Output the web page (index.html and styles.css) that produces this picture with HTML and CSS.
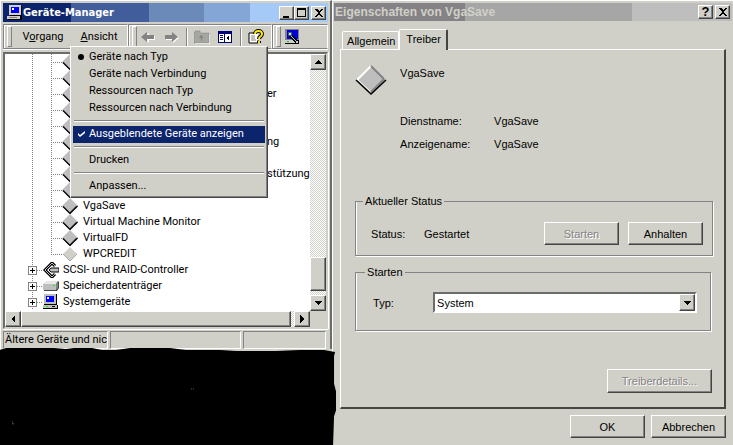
FILE: index.html
```html
<!DOCTYPE html>
<html lang="de">
<head>
    <meta charset="UTF-8">
    <meta name="viewport" content="width=device-width, initial-scale=1.0">
    <title>Geräte-Manager</title>
    <link rel="stylesheet" href="styles.css">
</head>
<body>
    <!-- shared tree icons -->
    <svg class="defs" width="0" height="0" aria-hidden="true">
        <symbol id="diamond" viewBox="0 0 16 16">
            <path d="M8 0l8 8-8 8-8-8z" fill="#bdbebd"/>
            <path d="M8 14l6-6" fill="none" stroke="#848284"/>
            <path d="M1 8.500l7 7 7.500-7.500" fill="none" stroke="#000" stroke-width="1.300"/>
        </symbol>
        <symbol id="diamond-off" viewBox="0 0 16 16">
            <path d="M8 1l7 7-7 7-7-7z" fill="#d1d0c8"/>
            <path d="M1 8l7 7 7-7" fill="none" stroke="#a5a6a0" stroke-width="1"/>
        </symbol>
    </svg>

    <div class="desktop">
        <div class="left">
            <section class="window">
                <header class="titlebar">
                    <svg class="icon" viewBox="0 0 16 16" shape-rendering="crispEdges">
                        <path d="M2 0h12v10H2z" fill="#d1d0c8"/><path d="M4 2h8v6H4z" fill="#0000ff"/><path d="M5 3h2v2H5z" fill="#fff"/>
                        <path d="M14 1h1v10H3v-1h11z" fill="#000"/><path d="M0 11h13v3H0z" fill="#d1d0c8"/><path d="M13 11h2v4H1v-1h12z" fill="#000"/><path d="M2 12h8v1H2z" fill="#848284"/>
                    </svg>
                    <h1>Geräte-Manager</h1>
                    <button class="cap" aria-label="Minimieren"><svg viewBox="0 0 10 10"><path d="M1 8h6v2H1z"/></svg></button>
                    <button class="cap" aria-label="Maximieren"><svg viewBox="0 0 10 10"><path d="M0 0h9v9H0zM1 2v6h7V2z" fill-rule="evenodd"/></svg></button>
                    <button class="cap close" aria-label="Schließen"><svg viewBox="0 0 10 10"><path d="M1 1h2l2 2 2-2h2L6 5l3 4H7L5 6 3 9H1l3-4z"/></svg></button>
                </header>

                <div class="toolbar">
                    <nav class="band menus">
                        <button class="menu-button"><span>V<u>o</u>rgang</span></button>
                        <div class="dropdown">
                            <button class="menu-button"><u>A</u>nsicht</button>
                            <div class="menu">
                                <button class="item"><span class="mark"><svg viewBox="0 0 8 8"><circle cx="4" cy="4" r="3"/></svg></span>Geräte nach Typ</button>
                                <button class="item"><span class="mark"></span>Geräte nach Verbindung</button>
                                <button class="item"><span class="mark"></span>Ressourcen nach Typ</button>
                                <button class="item"><span class="mark"></span>Ressourcen nach Verbindung</button>
                                <hr>
                                <button class="item active"><span class="mark"><svg viewBox="0 0 8 8"><path d="M1 3v2l2 2 5-4V1L3 5z"/></svg></span>Ausgeblendete Geräte anzeigen</button>
                                <hr>
                                <button class="item"><span class="mark"></span>Drucken</button>
                                <hr>
                                <button class="item"><span class="mark"></span>Anpassen...</button>
                            </div>
                        </div>
                    </nav>
                    <div class="band tools">
                        <button class="tool" aria-label="Zurück"><svg viewBox="0 0 16 16"><path d="M3 9l6-5v3h6v4H9v3z" fill="#fff"/><path d="M1 8l6-5v3h7v4H7v3z" fill="#848284"/></svg></button>
                        <button class="tool" aria-label="Vorwärts"><svg viewBox="0 0 16 16"><path d="M16 9l-6-5v3H3v4h7v3z" fill="#fff"/><path d="M15 8L9 3v3H2v4h7v3z" fill="#848284"/></svg></button>
                        <span class="sep"></span>
                        <button class="tool" aria-label="Aufwärts"><svg viewBox="0 0 16 16"><path d="M1 5h1l1-2h4l1 2h8v10H1z" fill="#fff"/><path d="M0 4l1-2h5l1 2h8v10H0z" fill="#a5a6a0"/><path d="M0 4l1-2h5l1 2h8v10H0z" fill="none" stroke="#848284" stroke-dasharray="1 1"/><path d="M7 6l3 3H8v3H7V9H5z" fill="#848284"/></svg></button>
                        <button class="tool" aria-label="Struktur"><svg viewBox="0 0 16 16" shape-rendering="crispEdges"><path d="M1 2h14v12H1z" fill="#00007b"/><path d="M2 5h5v8H2zM8 5h6v8H8z" fill="#fff"/><path d="M3 6h3v1H3zM3 8h3v1H3zM3 10h3v1H3z" fill="#00007b"/><path d="M12 6v6L9 9z" fill="#000"/></svg></button>
                        <span class="sep"></span>
                        <button class="tool" aria-label="Hilfe"><svg viewBox="0 0 16 16"><path d="M1 4h9v10H1z" fill="#fff"/><path d="M1 4h6M1 4v10h9v-3" fill="none" stroke="#000"/><path d="M3 7h4M3 9h4M3 11h5" stroke="#848284"/><path d="M7 5c0-4 7-4 7 0 0 3-3 2-3 5M11 12v2" fill="none" stroke="#000" stroke-width="4"/><path d="M7 5c0-4 7-4 7 0 0 3-3 2-3 5M11 12v2" fill="none" stroke="#ffe800" stroke-width="2"/></svg></button>
                    </div>
                    <div class="band extra">
                        <button class="tool" aria-label="Nach geänderter Hardware suchen"><svg viewBox="0 0 16 16" shape-rendering="crispEdges"><path d="M1 0h14v11H1z" fill="#848284"/><path d="M3 1h11v9H3z" fill="#0000d6"/><path d="M0 11h14v3H0z" fill="#d1d0c8"/><path d="M14 11h1v4H1v-1h13z" fill="#000"/><path d="M3 12h2v1H3z" fill="#00d600"/><path d="M6 6l7 7" stroke="#000" stroke-width="3"/><path d="M6 6l7 7" stroke="#9cf" stroke-width="1"/><circle cx="6" cy="5" r="2" fill="#cef" stroke="#357"/></svg></button>
                    </div>
                </div>

                <div class="view">
                    <ul class="tree">
                        <li class="child"><svg class="icon"><use href="#diamond"/></svg></li>
                        <li class="child"><svg class="icon"><use href="#diamond"/></svg></li>
                        <li class="child cut"><svg class="icon"><use href="#diamond"/></svg><span>er</span></li>
                        <li class="child"><svg class="icon"><use href="#diamond"/></svg></li>
                        <li class="child"><svg class="icon"><use href="#diamond"/></svg></li>
                        <li class="child cut"><svg class="icon"><use href="#diamond"/></svg><span>ng</span></li>
                        <li class="child"><svg class="icon"><use href="#diamond"/></svg></li>
                        <li class="child cut"><svg class="icon"><use href="#diamond"/></svg><span>stützung</span></li>
                        <li class="child"><svg class="icon"><use href="#diamond"/></svg></li>
                        <li class="child"><svg class="icon"><use href="#diamond"/></svg><span>VgaSave</span></li>
                        <li class="child"><svg class="icon"><use href="#diamond"/></svg><span>Virtual Machine Monitor</span></li>
                        <li class="child"><svg class="icon"><use href="#diamond"/></svg><span>VirtualFD</span></li>
                        <li class="child last"><svg class="icon"><use href="#diamond-off"/></svg><span>WPCREDIT</span></li>
                        <li class="group">
                            <button class="expand" aria-label="Erweitern"></button>
                            <svg class="icon" viewBox="0 0 16 16"><path d="M12 4L9 1 2 8l7 7 3-3" fill="none" stroke="#000" stroke-width="3"/><path d="M12 4L9 1 2 8l7 7 3-3" fill="none" stroke="#bdbebd" stroke-width="1"/><path d="M6 8l2-2h8v4H8z" fill="#bdbebd" stroke="#000"/></svg>
                            <span>SCSI- und RAID-Controller</span>
                        </li>
                        <li class="group">
                            <button class="expand" aria-label="Erweitern"></button>
                            <svg class="icon" viewBox="0 0 16 16"><path d="M1 6l3-3h11l1 1v6l-2 3H1z" fill="#424542"/><path d="M0 6l3-3h12l-2 3z" fill="#e7e7e7"/><path d="M0 6h13v6H0z" fill="#bdbebd"/><path d="M13 6l2-2v6l-2 2z" fill="#848284"/><path d="M10 7h2v1h-2z" fill="#0f0"/></svg>
                            <span>Speicherdatenträger</span>
                        </li>
                        <li class="group">
                            <button class="expand" aria-label="Erweitern"></button>
                            <svg class="icon" viewBox="0 0 16 16" shape-rendering="crispEdges"><path d="M1 0h13v11H1z" fill="#000"/><path d="M1 0h12v10H1z" fill="#bdbebd"/><path d="M3 2h8v6H3z" fill="#0000ff"/><path d="M4 3h2v2H4z" fill="#fff"/><path d="M0 11h15v4H0z" fill="#000"/><path d="M0 11h14v3H0z" fill="#bdbebd"/><path d="M3 12h2v1H3z" fill="#0f0"/><path d="M9 12h3v1H9z" fill="#000"/></svg>
                            <span>Systemgeräte</span>
                        </li>
                    </ul>
                    <div class="scroll vertical">
                        <button class="arrow" aria-label="Nach oben"><svg viewBox="0 0 8 8"><path d="M4 2l4 4H0z"/></svg></button>
                        <div class="track"><div class="thumb"></div></div>
                        <button class="arrow" aria-label="Nach unten"><svg viewBox="0 0 8 8"><path d="M0 2h8L4 6z"/></svg></button>
                    </div>
                    <div class="scroll horizontal">
                        <button class="arrow" aria-label="Nach links"><svg viewBox="0 0 8 8"><path d="M6 0v8L2 4z"/></svg></button>
                        <div class="track"><div class="thumb"></div></div>
                        <button class="arrow" aria-label="Nach rechts"><svg viewBox="0 0 8 8"><path d="M2 0l4 4-4 4z"/></svg></button>
                    </div>
                </div>

                <footer class="status">
                    <span>Ältere Geräte und nic</span>
                    <span></span>
                    <span></span>
                </footer>
            </section>
            <div class="blackout">
                <svg viewBox="0 0 336 98" preserveAspectRatio="none">
                    <path d="M0 2L6 0h48l12 1 8-1h18l10 2h14l14-2h40l16 2h34l16 1h40l24-1h24l11 2-1 4v28l2 8v19l-2 6-1 30H0z"/>
                    <path d="M191 41h1v1h-1zM193 41h1v1h-1zM12 74h1v1h-1zM12 76h2v1h-2z" fill="#555"/>
                </svg>
            </div>
        </div>

        <section class="dialog">
            <header class="titlebar">
                <h2>Eigenschaften von VgaSave</h2>
                <button class="cap" aria-label="Hilfe">?</button>
                <button class="cap close" aria-label="Schließen"><svg viewBox="0 0 10 10"><path d="M1 1h2l2 2 2-2h2L6 5l3 4H7L5 6 3 9H1l3-4z"/></svg></button>
            </header>

            <div class="tabs">
                <button class="tab">Allgemein</button>
                <button class="tab current">Treiber</button>
            </div>

            <div class="page">
                <div class="device">
                    <svg class="big-icon" viewBox="0 0 32 32">
                        <path d="M16 1l15 15-15 15L1 16z" fill="#bdbebd"/>
                        <path d="M2 16L16 2" stroke="#fff" stroke-width="2"/>
                        <path d="M16 2l13 13" stroke="#848284" stroke-width="2"/>
                        <path d="M2 15l14 13" stroke="#fff" stroke-width="1"/>
                        <path d="M16 28l13-13" stroke="#848284" stroke-width="2"/>
                        <path d="M1 16l15 14 15-14" fill="none" stroke="#000" stroke-width="1.500"/>
                    </svg>
                    <span>VgaSave</span>
                </div>
                <dl class="facts">
                    <dt>Dienstname:</dt><dd>VgaSave</dd>
                    <dt>Anzeigename:</dt><dd>VgaSave</dd>
                </dl>

                <fieldset class="state">
                    <legend>Aktueller Status</legend>
                    <div class="row">
                        <span class="label">Status:</span>
                        <span class="value">Gestartet</span>
                        <button class="btn" disabled>Starten</button>
                        <button class="btn">Anhalten</button>
                    </div>
                </fieldset>

                <fieldset class="start">
                    <legend>Starten</legend>
                    <div class="row">
                        <label for="typ">Typ:</label>
                        <div class="combo">
                            <select id="typ">
                                <option>System</option>
                            </select>
                            <span class="combo-arrow"><svg viewBox="0 0 8 8"><path d="M0 2h8L4 6z"/></svg></span>
                        </div>
                    </div>
                </fieldset>

                <button class="btn details" disabled>Treiberdetails...</button>
            </div>

            <div class="actions">
                <button class="btn">OK</button>
                <button class="btn">Abbrechen</button>
            </div>
        </section>
    </div>
</body>
</html>
```

FILE: styles.css
```css
* {
    box-sizing: border-box;
}

body {
    margin: 0;
    background: #d1d0c8;
    color: #000;
    font: 11px/16px Roboto, "DejaVu Sans Condensed", sans-serif;
}

button,
select {
    margin: 0;
    padding: 0;
    border: 0;
    background: #d1d0c8;
    color: #000;
    font: inherit;
}

.defs {
    position: absolute;
}

.desktop {
    display: grid;
    grid-template-columns: 45.3% 1fr;
    min-height: 100vh;
}

.icon {
    flex: none;
    width: 16px;
    height: 16px;
}

/* raised edges used by buttons, thumbs and the menu */
.cap,
.arrow,
.thumb,
.combo-arrow,
.btn,
.menu {
    background: #d1d0c8;
    border: 1px solid;
    border-color: #fff #424542 #424542 #fff;
    box-shadow: inset -1px -1px #848284;
}

/* left window */
.left {
    display: flex;
    flex-direction: column;
    min-width: 0;
}

.window {
    padding: 2px 2px 0;
    border-top: 1px solid #fff;
    border-left: 1px solid #fff;
    border-right: 2px solid #6b6d6b;
}

.titlebar {
    display: flex;
    align-items: center;
    height: 19px;
    padding: 0 2px 0 4px;
}

.window .titlebar {
    background: linear-gradient(to right, #0c246c 21%, #425d9c 21% 45%, #6b8aba 45% 62%, #84a6d6 62% 76%, #a5caf7 76%);
}

.titlebar h1,
.titlebar h2 {
    flex: 1;
    margin: 0;
    font-size: 12px;
    line-height: 18px;
    white-space: nowrap;
}

.titlebar h1 {
    color: #fff;
    font-family: "DejaVu Sans Condensed", "DejaVu Sans", sans-serif;
    font-size: 11px;
}

.cap {
    display: flex;
    align-items: center;
    justify-content: center;
    flex: none;
    width: 15px;
    height: 14px;
    font-weight: bold;
    font-size: 13px;
    line-height: 12px;
}

.cap svg {
    width: 10px;
    height: 10px;
    shape-rendering: crispEdges;
}

.close {
    margin-left: 2px;
}

.toolbar {
    display: flex;
    height: 25px;
    margin-top: 2px;
}

.band {
    display: flex;
    align-items: center;
    border: 1px solid #848284;
    border-right-color: #fff;
    box-shadow: inset 1px 1px #fff, 0 1px #fff;
}

.band::before {
    content: "";
    flex: none;
    width: 3px;
    height: 19px;
    margin-left: 3px;
    border: 1px solid;
    border-color: #fff #848284 #848284 #fff;
}

.menus {
    flex: 0 0 125px;
}

.menus::before {
    margin-right: 3px;
}

.tools {
    flex: 0 0 144px;
}

.extra {
    flex: 1;
}

.menu-button {
    width: 56px;
    height: 20px;
    text-align: center;
    white-space: nowrap;
}

.dropdown {
    position: relative;
}

.tool {
    flex: none;
    width: 23px;
    height: 20px;
    padding: 2px 3px;
}

.tool svg {
    display: block;
    width: 16px;
    height: 16px;
}

.sep {
    flex: none;
    width: 2px;
    height: 18px;
    margin: 0 3px;
    border-left: 1px solid #848284;
    border-right: 1px solid #fff;
}

.menu {
    position: absolute;
    z-index: 3;
    top: 19px;
    left: -1px;
    width: 198px;
    padding: 2px;
}

.item {
    display: flex;
    align-items: center;
    width: 100%;
    height: 17px;
    white-space: nowrap;
}

.item.active {
    background: #0c246c;
    color: #fff;
}

.mark {
    display: flex;
    justify-content: center;
    width: 16px;
}

.mark svg {
    width: 8px;
    height: 8px;
    fill: currentColor;
}

.menu hr {
    height: 2px;
    margin: 3px 1px 4px;
    border: 0;
    border-top: 1px solid #848284;
    border-bottom: 1px solid #fff;
}

.view {
    display: grid;
    grid-template-columns: 1fr 16px;
    margin-top: 3px;
    border: 2px solid;
    border-color: #6b6d6b #d1d0c8 #d1d0c8 #6b6d6b;
    box-shadow: 0 1px #fff, 1px 0 #fff;
}

.tree {
    min-width: 0;
    margin: 0;
    padding: 0 0 1px 18px;
    background: #fff;
    list-style: none;
    overflow: hidden;
}

.tree li {
    display: flex;
    align-items: center;
    height: 16px;
    white-space: nowrap;
}

/* dotted guides: outer level, inner level, branch to the icon */
.child {
    gap: 5px;
    padding-left: 39px;
    background:
        repeating-linear-gradient(#848284 0 1px, transparent 1px 2px) 9px 0 / 1px 100% no-repeat,
        repeating-linear-gradient(#848284 0 1px, transparent 1px 2px) 28px 0 / 1px 100% no-repeat,
        repeating-linear-gradient(to right, #848284 0 1px, transparent 1px 2px) 28px 8px / 12px 1px no-repeat;
}

.child.last {
    background-size: 1px 100%, 1px 8px, 12px 1px;
}

.cut span {
    margin-left: 184px;
}

.group {
    padding-left: 5px;
    background:
        repeating-linear-gradient(#848284 0 1px, transparent 1px 2px) 9px 0 / 1px 100% no-repeat,
        repeating-linear-gradient(to right, #848284 0 1px, transparent 1px 2px) 10px 8px / 10px 1px no-repeat;
}

.group .icon {
    margin: 0 4px 0 6px;
}

.expand {
    width: 9px;
    height: 9px;
    border: 1px solid #848284;
    background:
        linear-gradient(#000, #000) center / 5px 1px no-repeat,
        linear-gradient(#000, #000) center / 1px 5px no-repeat,
        #fff;
}

.scroll {
    display: flex;
}

.vertical {
    flex-direction: column;
}

.arrow,
.combo-arrow {
    display: flex;
    align-items: center;
    justify-content: center;
    flex: none;
    width: 16px;
    height: 16px;
}

.arrow svg,
.combo-arrow svg {
    width: 8px;
    height: 8px;
    shape-rendering: crispEdges;
}

.track {
    display: flex;
    flex: 1;
    background: repeating-conic-gradient(#fff 0 25%, #d1d0c8 0 50%) 0 0 / 2px 2px;
}

.vertical .track {
    flex-direction: column;
    justify-content: flex-end;
    padding-bottom: 4px;
}

.vertical .thumb {
    height: 34px;
}

.horizontal .track {
    padding-right: 3px;
}

.horizontal .thumb {
    flex: 1;
}

.status {
    display: grid;
    grid-template-columns: 105fr 131fr 83fr;
    gap: 2px;
    margin-top: 2px;
    padding-right: 2px;
}

.status span {
    height: 18px;
    padding-left: 1px;
    border: 1px solid;
    border-color: #848284 #fff #fff #848284;
    overflow: hidden;
    white-space: nowrap;
}

.blackout {
    position: relative;
    z-index: 2;
    flex: 1;
    margin-right: -4px;
}

.blackout svg {
    position: absolute;
    top: -1px;
    left: 0;
    width: 100%;
    height: calc(100% + 1px);
}

/* properties dialog */
.dialog {
    display: flex;
    flex-direction: column;
    min-width: 0;
    padding: 2px 1px 7px;
    border-top: 1px solid #fff;
    border-left: 1px solid #fff;
    font-family: "Liberation Sans", Arial, sans-serif;
}

.dialog .titlebar {
    height: 18px;
    padding-left: 1px;
    background: linear-gradient(to right, #848284 33%, #a5a6a5 33% 75%, #bdbebd 75%);
}

.titlebar h2 {
    color: #d1d0c8;
}

.tabs {
    display: flex;
    align-items: flex-end;
    padding: 8px 8px 0;
}

.tab {
    height: 18px;
    padding: 0 3px 0 4px;
    border: 1px solid #fff;
    border-bottom: 0;
    border-radius: 2px 2px 0 0;
}

.tab.current {
    position: relative;
    height: 21px;
    margin-bottom: -1px;
    padding: 0 5px 2px 6px;
    border-right: 2px solid #424542;
}

.page {
    display: flex;
    flex: 1;
    flex-direction: column;
    margin: 0 6px;
    padding: 14px 11px 14px 14px;
    border: 1px solid #fff;
    border-right: 2px solid #424542;
    border-bottom: 2px solid #424542;
}

.device {
    display: flex;
    gap: 13px;
    line-height: 18px;
}

.big-icon {
    width: 32px;
    height: 32px;
}

.facts {
    display: grid;
    grid-template-columns: 94px 1fr;
    row-gap: 7px;
    margin: 17px 0 0 45px;
}

.facts dd {
    margin: 0;
}

fieldset {
    min-width: 0;
    margin: 0;
    padding: 0 9px 0 15px;
    border: 1px solid #848284;
    box-shadow: 1px 1px #fff, inset 1px 0 #fff;
}

legend {
    margin-left: -8px;
    padding: 0 2px;
}

.row {
    display: flex;
    align-items: center;
}

.state {
    margin-top: 41px;
    padding-bottom: 10px;
}

.state .row {
    gap: 9px;
    padding-top: 13px;
}

.label {
    width: 44px;
}

.value {
    flex: 1;
}

.start {
    margin: 8px 2px 0 0;
    padding: 12px 13px 17px 17px;
}

.start label {
    width: 60px;
}

.combo {
    position: relative;
    flex: 1;
}

.combo select {
    display: block;
    width: 100%;
    height: 21px;
    padding: 0 20px 0 2px;
    border: 2px solid;
    border-color: #6b6d6b #fff #fff #6b6d6b;
    background: #fff;
    appearance: none;
}

.combo-arrow {
    position: absolute;
    top: 2px;
    right: 2px;
    height: 17px;
    pointer-events: none;
}

.btn {
    width: 75px;
    height: 23px;
}

.btn:disabled {
    color: #848284;
    text-shadow: 1px 1px #fff;
}

.details {
    align-self: flex-end;
    width: 105px;
    height: 24px;
    margin-top: auto;
    margin-right: 1px;
}

.actions {
    display: flex;
    justify-content: flex-end;
    gap: 6px;
    padding: 6px 6px 0;
}
```
